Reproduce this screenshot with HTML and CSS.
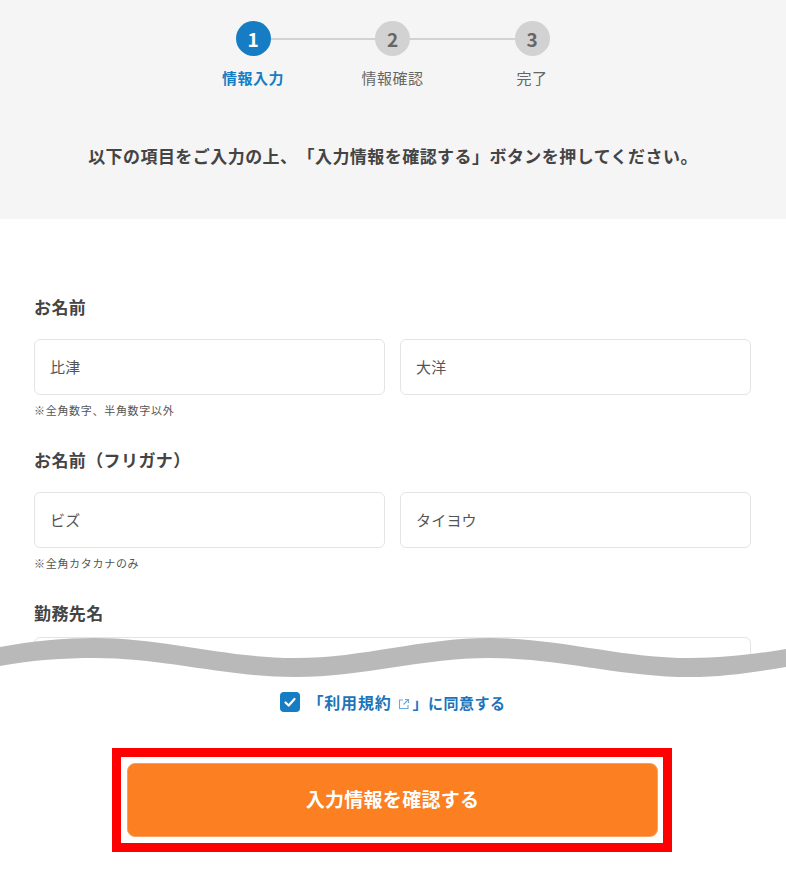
FILE: index.html
```html
<!DOCTYPE html>
<html lang="ja">
<head>
    <meta charset="UTF-8">
    <meta name="viewport" content="width=device-width, initial-scale=1.0">
    <title>情報入力</title>
    <link rel="stylesheet" href="styles.css">
</head>
<body>
<div class="intro">
    <div class="steps">
        <div class="step active">
            <div class="step-num">1</div>
            <div class="step-label">情報入力</div>
        </div>
        <div class="step">
            <div class="step-num">2</div>
            <div class="step-label">情報確認</div>
        </div>
        <div class="step">
            <div class="step-num">3</div>
            <div class="step-label">完了</div>
        </div>
    </div>
    <p class="lead">以下の項目をご入力の上、「入力情報を確認する」ボタンを押してください。</p>
</div>

<div class="form">
    <div class="field">
        <div class="field-label">お名前</div>
        <div class="inputs">
            <div class="input">比津</div>
            <div class="input">大洋</div>
        </div>
        <div class="hint">※全角数字、半角数字以外</div>
    </div>
    <div class="field">
        <div class="field-label">お名前（フリガナ）</div>
        <div class="inputs">
            <div class="input">ビズ</div>
            <div class="input">タイヨウ</div>
        </div>
        <div class="hint">※全角カタカナのみ</div>
    </div>
    <div class="field">
        <div class="field-label">勤務先名</div>
        <div class="input input-wide"></div>
    </div>
    <!-- 途中を省略した波線 -->
    <svg class="wave" viewBox="0 0 786 50" width="786" height="50">
        <path class="wave-cover" d="M0 28 C32 22 64 20 95 20 C165 20 225 39 295 39 C365 39 420 20 490 20 C560 20 620 39 690 39 C725 39 755 34 786 29 V50 H0 Z"/>
        <path class="wave-band" d="M0 9 C32 3 64 0 95 0 C165 0 225 20 295 20 C365 20 420 0 490 0 C560 0 620 20 690 20 C725 20 755 16 786 11 V29 C755 34 725 39 690 39 C620 39 560 20 490 20 C420 20 365 39 295 39 C225 39 165 20 95 20 C64 20 32 22 0 28 Z"/>
    </svg>
</div>

<div class="agree">
    <span class="checkbox">
        <svg viewBox="0 0 20 20" width="20" height="20"><path d="M5.5 10.5 L8.7 13.5 L14.5 7" fill="none" stroke="#fff" stroke-width="2.2" stroke-linecap="round" stroke-linejoin="round"/></svg>
    </span>
    <span class="agree-text"><span class="agree-link">「利用規約</span><svg class="ext" viewBox="0 0 12 12" width="12" height="12"><path d="M5 2 H1.5 V10.5 H10 V7 M7 1.5 H10.5 V5 M10.5 1.5 L5.5 6.5" fill="none" stroke="#6aa9d8" stroke-width="1.1"/></svg>」に同意する</span>
</div>

<div class="highlight">
    <div class="submit">入力情報を確認する</div>
</div>
</body>
</html>
```

FILE: styles.css
```css
body {
    margin: 0;
    font-family: "Noto Sans CJK JP", "Noto Sans", sans-serif;
    color: #444;
    background-color: #fff;
    text-spacing-trim: space-all;
}
.intro {
    height: 219px;
    background-color: #f5f5f5;
    box-sizing: border-box;
    padding-top: 21px;
}
.steps {
    display: flex;
    justify-content: center;
    margin-left: -1px;
}
.step {
    position: relative;
    width: 139.5px;
    text-align: center;
}
.step + .step::before {
    content: "";
    position: absolute;
    top: 17px;
    left: -70px;
    width: 140px;
    height: 2px;
    background-color: #d2d2d2;
}
.step-num {
    position: relative;
    z-index: 1;
    width: 35px;
    height: 35px;
    margin: 0 auto;
    border-radius: 50%;
    background-color: #d2d2d2;
    color: #666;
    font-size: 19px;
    font-weight: bold;
    line-height: 35px;
}
.step-label {
    margin-top: 11px;
    font-size: 15px;
    letter-spacing: 0.5px;
    line-height: 22px;
    color: #666;
}
.active .step-num {
    background-color: #167dc4;
    color: #fff;
}
.active .step-label {
    color: #167dc4;
    font-weight: bold;
}
.lead {
    margin: 55px 0 0;
    font-size: 17px;
    font-weight: bold;
    letter-spacing: 0.45px;
    line-height: 24px;
    text-align: center;
}
.form {
    position: relative;
    height: 468px;
    box-sizing: border-box;
    padding: 76px 35px 0 34px;
    overflow: hidden;
}
.field {
    margin-bottom: 30px;
}
.field-label {
    font-size: 17px;
    font-weight: bold;
    letter-spacing: 0.4px;
    line-height: 24px;
}
.inputs {
    display: flex;
    gap: 15px;
    margin-top: 20px;
}
.input {
    flex: 1;
    height: 56px;
    box-sizing: border-box;
    padding-left: 15px;
    border: 1px solid #e4e4e4;
    border-radius: 6px;
    background-color: #fff;
    font-size: 15px;
    letter-spacing: 0.2px;
    line-height: 54px;
    color: #555;
}
.input-wide {
    margin-top: 12px;
}
.hint {
    margin-top: 7px;
    font-size: 11px;
    letter-spacing: 0.7px;
    line-height: 16px;
    color: #555;
}
.wave {
    position: absolute;
    left: 0;
    top: 419px;
    display: block;
}
.wave-band {
    fill: #b9b9b9;
}
.wave-cover {
    fill: #fff;
}
.agree {
    display: flex;
    justify-content: center;
    align-items: center;
    gap: 7px;
    margin-top: 3px;
    height: 24px;
    font-size: 15px;
    font-weight: bold;
    letter-spacing: 0.5px;
    color: #1a75bb;
}
.agree-link {
    font-size: 16px;
    letter-spacing: 0.8px;
}
.checkbox {
    width: 20px;
    height: 20px;
    border-radius: 4px;
    background-color: #167dc4;
}
.checkbox svg {
    display: block;
}
.agree-text {
    line-height: 24px;
}
.ext {
    margin: 0 3px 0 6px;
    vertical-align: -1px;
}
.highlight {
    box-sizing: border-box;
    width: 560px;
    margin: 34px 0 0 112px;
    padding: 6px 5px 6px 6px;
    border: 9px solid #f00;
}
.submit {
    height: 74px;
    box-sizing: border-box;
    border: 1px solid #f5a25f;
    border-radius: 8px;
    background-color: #fc7f22;
    color: #fff;
    font-size: 19px;
    font-weight: bold;
    letter-spacing: 0.3px;
    line-height: 70px;
    text-align: center;
}
```
